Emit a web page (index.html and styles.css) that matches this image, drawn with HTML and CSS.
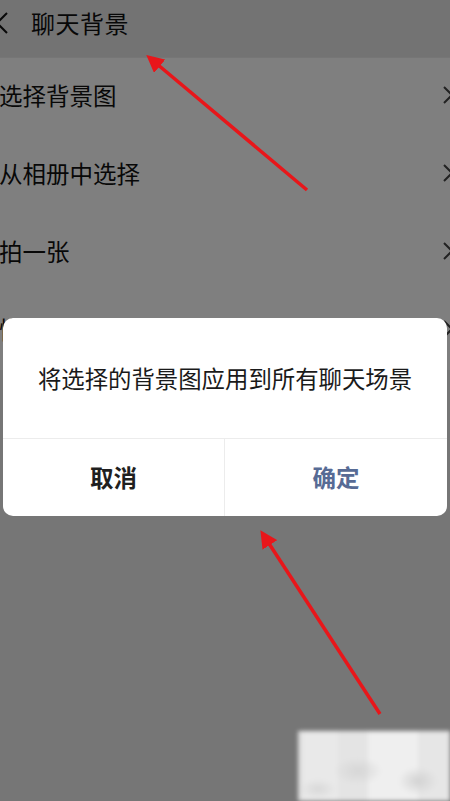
FILE: index.html
```html
<!DOCTYPE html>
<html lang="zh-CN">
<head>
<meta charset="utf-8">
<title>聊天背景</title>
<link rel="stylesheet" href="styles.css">
</head>
<body>
<div class="screen">
  <header class="topbar">
    <svg class="back" width="12" height="24" viewBox="0 0 12 24"><polyline points="8,2 -2,12 8,22" fill="none" stroke="#111" stroke-width="2"/></svg>
    <h1 class="title">聊天背景</h1>
  </header>
  <ul class="menu">
    <li class="row"><span>选择背景图</span><svg class="chev" width="10" height="20" viewBox="0 0 10 20"><polyline points="1,2 9,10 1,18" fill="none" stroke="#444" stroke-width="2"/></svg></li>
    <li class="row"><span>从相册中选择</span><svg class="chev" width="10" height="20" viewBox="0 0 10 20"><polyline points="1,2 9,10 1,18" fill="none" stroke="#444" stroke-width="2"/></svg></li>
    <li class="row"><span>拍一张</span><svg class="chev" width="10" height="20" viewBox="0 0 10 20"><polyline points="1,2 9,10 1,18" fill="none" stroke="#444" stroke-width="2"/></svg></li>
    <li class="row"><span>恢复默认背景</span><svg class="chev" width="10" height="20" viewBox="0 0 10 20"><polyline points="1,2 9,10 1,18" fill="none" stroke="#444" stroke-width="2"/></svg></li>
  </ul>

  <div class="mask"></div>

  <div class="dialog">
    <p class="dialog-msg">将选择的背景图应用到所有聊天场景</p>
    <div class="dialog-actions">
      <button class="btn btn-cancel">取消</button>
      <button class="btn btn-ok">确定</button>
    </div>
  </div>

  <svg class="marks" width="450" height="801" viewBox="0 0 450 801">
    <defs>
      <marker id="head" markerWidth="5" markerHeight="5" refX="1" refY="2.5" orient="auto" markerUnits="strokeWidth">
        <polygon points="0,0 5,2.5 0,5" fill="#e8161a"/>
      </marker>
    </defs>
    <line x1="307" y1="190" x2="157" y2="64" stroke="#e8161a" stroke-width="3.5" marker-end="url(#head)"/>
    <line x1="380" y1="714" x2="268" y2="542" stroke="#e8161a" stroke-width="3.5" marker-end="url(#head)"/>
  </svg>

  <div class="stamp"></div>
</div>
</body>
</html>
```

FILE: styles.css
```css
* { box-sizing: border-box; }

html, body {
  margin: 0;
  padding: 0;
}

body {
  width: 450px;
  height: 801px;
  overflow: hidden;
  background: #ededed;
  font-family: "Noto Sans CJK SC", "Noto Sans", sans-serif;
  color: #1a1a1a;
}

.screen {
  position: relative;
  width: 450px;
  height: 801px;
}

/* navigation bar */
.topbar {
  height: 57px;
  background: #e6e6e6;
  display: flex;
  align-items: center;
  gap: 20px;
  padding-bottom: 12px;
}

.back {
  flex: none;
  margin-left: -1px;
}

.title {
  margin: 0;
  font-size: 24px;
  font-weight: 400;
  color: #111;
  letter-spacing: 0.5px;
}

/* option list */
.menu {
  list-style: none;
  margin: 0;
  padding: 0;
  background: #fff;
  margin-top: 1px;
}

.row {
  height: 78px;
  display: flex;
  align-items: center;
  justify-content: space-between;
  font-size: 23.5px;
  color: #111;
  margin-left: -1px;
  padding-bottom: 5px;
}

.chev {
  flex: none;
  margin-right: -3px;
}

/* dimming layer behind the dialog */
.mask {
  position: absolute;
  inset: 0;
  background: rgba(0, 0, 0, 0.5);
}

/* confirm dialog */
.dialog {
  position: absolute;
  top: 318px;
  left: 3px;
  width: 444px;
  height: 198px;
  background: #fff;
  border-radius: 10px;
  display: flex;
  flex-direction: column;
  overflow: hidden;
}

.dialog-msg {
  margin: 0;
  height: 120px;
  display: flex;
  align-items: center;
  justify-content: center;
  font-size: 23.4px;
  color: #1a1a1a;
  padding-top: 0;
}

.dialog-actions {
  flex: 1;
  display: grid;
  grid-template-columns: 1fr 1fr;
  border-top: 1px solid #ececec;
}

.btn {
  border: 0;
  background: transparent;
  font-family: inherit;
  font-size: 23.5px;
  font-weight: 700;
  padding: 0 0 2px;
}

.btn-cancel {
  color: #1f1f1f;
  border-right: 1px solid #ececec;
}

.btn-ok {
  color: #576b95;
}

/* annotation arrows drawn over the page */
.marks {
  position: absolute;
  left: 0;
  top: 0;
  pointer-events: none;
}

/* blurred mosaic tile in the corner */
.stamp {
  position: absolute;
  left: 298px;
  top: 731px;
  width: 152px;
  height: 70px;
  background:
    radial-gradient(ellipse 24px 14px at 60px 40px, #d6d6d6, transparent),
    radial-gradient(ellipse 20px 14px at 120px 50px, #d2d2d2, transparent),
    radial-gradient(ellipse 18px 10px at 20px 58px, #d8d8d8, transparent),
    linear-gradient(90deg, #dcdcdc 0 4px, #e9e9e9 4px 40px, #e4e4e4 40px 70px, #efefef 70px 120px, #e6e6e6 120px);
  filter: blur(2px);
}
```
